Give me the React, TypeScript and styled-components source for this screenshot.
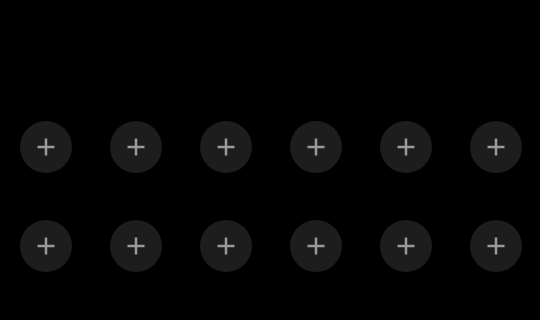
import React from 'react';
import styled, { createGlobalStyle } from 'styled-components';

const GlobalStyle = createGlobalStyle`
  html, body {
    margin: 0;
    padding: 0;
    background: #000;
    font-family: "Liberation Sans", Arial, sans-serif;
  }
`;

const Page = styled.div`
  width: 540px;
  height: 320px;
  background: #000;
  box-sizing: border-box;
  padding: 121px 0 0 20px;
`;

const Grid = styled.div`
  display: grid;
  grid-template-columns: repeat(6, 52px);
  column-gap: 38px;
  row-gap: 47px;
`;

const AddButton = styled.button`
  width: 52px;
  height: 52px;
  border-radius: 50%;
  border: none;
  padding: 0;
  background: #1c1d1c;
  display: flex;
  align-items: center;
  justify-content: center;
  cursor: pointer;

  svg {
    display: block;
  }
`;

const PlusIcon: React.FC = () => (
  <svg width="18" height="18" viewBox="0 0 18 18">
    <path d="M9 0.5V17.5M0.5 9H17.5" stroke="#9a9a9a" strokeWidth="2.5" fill="none" />
  </svg>
);

const slots = Array.from({ length: 12 }, (_, i) => i);

const App: React.FC = () => {
  return (
    <>
      <GlobalStyle />
      <Page>
        <Grid>
          {slots.map((i) => (
            <AddButton key={i} aria-label="Add">
              <PlusIcon />
            </AddButton>
          ))}
        </Grid>
      </Page>
    </>
  );
};

export default App;
